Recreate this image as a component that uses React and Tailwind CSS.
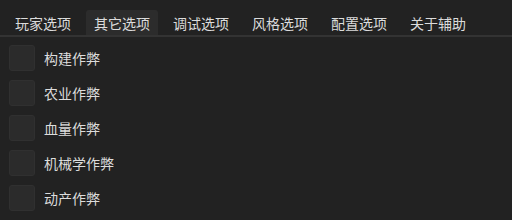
import React from 'react';

const tabs = ['玩家选项', '其它选项', '调试选项', '风格选项', '配置选项', '关于辅助'];
const options = ['构建作弊', '农业作弊', '血量作弊', '机械学作弊', '动产作弊'];

const App = () => {
  return (
    <div
      className="w-[512px] h-[220px] bg-[#222222] text-[#dcdcdc] text-[14px] overflow-hidden"
      style={{ fontFamily: '"Noto Sans CJK SC", "Noto Sans", sans-serif' }}
    >
      {/* Tabs */}
      <div className="flex gap-[7px] px-[7px] pt-[10px] border-b-2 border-[#333333]">
        {tabs.map((t, i) => (
          <div
            key={t}
            className={`h-[25px] px-2 flex items-center leading-none rounded-t-[3px] ${
              i === 1 ? 'bg-[#2c2c2c]' : ''
            }`}
          >
            {t}
          </div>
        ))}
      </div>

      {/* Options */}
      <div className="flex flex-col gap-[9px] pl-[9px] pt-[8px]">
        {options.map((o) => (
          <label key={o} className="flex items-center gap-[9px] h-[26px]">
            <span className="w-[26px] h-[26px] rounded-[3px] bg-[#2b2b2b] border border-[#303030]" />
            <span className="leading-none">{o}</span>
          </label>
        ))}
      </div>
    </div>
  );
};

export default App;
